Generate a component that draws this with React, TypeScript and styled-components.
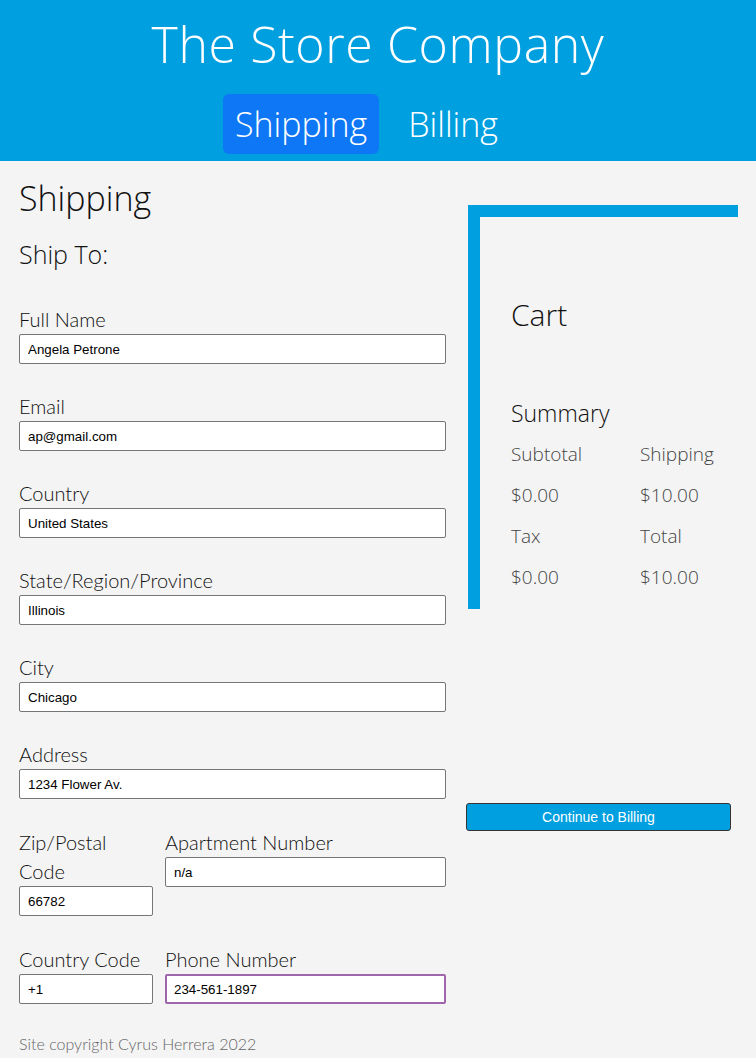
import React from "react";
import styled, { createGlobalStyle } from "styled-components";

const Global = createGlobalStyle`
  html, body { margin: 0; padding: 0; background: #f4f4f4; }
  body { font-family: "Lato", "Noto Sans", sans-serif; color: #111; }
  * { box-sizing: border-box; }
`;

const Header = styled.header`
  background: #009fe0;
  height: 161px;
  display: flex;
  flex-direction: column;
  align-items: center;
  color: #fff;
`;

const Title = styled.h1`
  margin: 12px 0 0;
  font-family: "Open Sans", sans-serif;
  font-weight: 300;
  font-size: 50px;
  line-height: 64px;
  letter-spacing: 0.6px;
`;

const Nav = styled.nav`
  display: flex;
  margin-top: 18px;
  margin-left: -6px;
`;

const NavItem = styled.a<{ $active?: boolean }>`
  display: flex;
  align-items: center;
  height: 60px;
  padding: 0 12px;
  border-radius: 6px;
  background: ${(p) => (p.$active ? "#0d77f5" : "transparent")};
  color: #fff;
  font-family: "Open Sans", sans-serif;
  font-weight: 300;
  font-size: 34px;
  margin-right: 17px;
`;

const Main = styled.main`
  display: flex;
  padding: 0 18px 0 19px;
`;

const Left = styled.section`
  width: 427px;
  flex: none;
`;

const Right = styled.aside`
  margin-left: 20px;
  flex: 1;
  display: flex;
  flex-direction: column;
`;

const H2 = styled.h2`
  margin: 15px 0 0;
  font-family: "Open Sans", sans-serif;
  font-weight: 300;
  font-size: 34px;
  line-height: 44px;
`;

const H3 = styled.h3`
  margin: 17px 0 34px;
  font-family: "Open Sans", sans-serif;
  font-weight: 300;
  font-size: 25px;
  line-height: 34px;
`;

const Group = styled.div`
  margin-bottom: 28px;
`;

const Label = styled.label`
  display: block;
  font-family: "Lato", sans-serif;
  font-weight: 300;
  font-size: 20px;
  line-height: 29px;
`;

const Input = styled.input<{ $focus?: boolean }>`
  display: block;
  width: 100%;
  height: 30px;
  font-family: "Liberation Sans", Arial, sans-serif;
  font-size: 13.33px;
  color: #000;
  background: #fff;
  border: ${(p) => (p.$focus ? "2px solid #a066ab" : "1px solid #767676")};
  border-radius: 2px;
  outline: none;
  padding: 0 0 0 ${(p) => (p.$focus ? "7px" : "8px")};
`;

const Pair = styled.div`
  display: grid;
  grid-template-columns: 134px 1fr;
  column-gap: 12px;
  margin-bottom: 29px;
`;

const PairCell = styled.div<{ $pad?: number }>`
  padding-top: ${(p) => p.$pad ?? 0}px;
`;

const Footer = styled.footer`
  font-family: "Lato", sans-serif;
  font-weight: 300;
  font-size: 16px;
  color: #666;
  margin-top: 30px;
`;

const CartBox = styled.div`
  margin-top: 44px;
  margin-left: 2px;
  width: 270px;
  height: 404px;
  border-top: 12px solid #009fe0;
  border-left: 12px solid #009fe0;
  padding: 78px 0 0 31px;
`;

const CartTitle = styled.h2`
  margin: 0;
  font-family: "Open Sans", sans-serif;
  font-weight: 300;
  font-size: 30px;
  line-height: 40px;
`;

const Summary = styled.h3`
  margin: 63px 0 11px;
  font-family: "Open Sans", sans-serif;
  font-weight: 300;
  font-size: 23px;
  line-height: 30px;
`;

const SumGrid = styled.div`
  display: grid;
  grid-template-columns: 129px 1fr;
  row-gap: 11px;
  font-family: "Open Sans", sans-serif;
  font-weight: 300;
  font-size: 19px;
  line-height: 30px;
  color: #444;
`;

const Button = styled.button`
  margin-top: 194px;
  width: 265px;
  height: 28px;
  background: #009fe0;
  color: #fff;
  border: 1px solid #333;
  border-radius: 3px;
  font-family: "Liberation Sans", Arial, sans-serif;
  font-size: 14px;
`;

const fields: [string, string][] = [
  ["Full Name", "Angela Petrone"],
  ["Email", "ap@gmail.com"],
  ["Country", "United States"],
  ["State/Region/Province", "Illinois"],
  ["City", "Chicago"],
  ["Address", "1234 Flower Av."],
];

export default function App() {
  return (
    <>
      <Global />
      <Header>
        <Title>The Store Company</Title>
        <Nav>
          <NavItem $active>Shipping</NavItem>
          <NavItem>Billing</NavItem>
        </Nav>
      </Header>
      <Main>
        <Left>
          <H2>Shipping</H2>
          <H3>Ship To:</H3>
          {fields.map(([l, v]) => (
            <Group key={l}>
              <Label>{l}</Label>
              <Input defaultValue={v} readOnly />
            </Group>
          ))}
          <Pair>
            <PairCell $pad={1}>
              <Label>Zip/Postal Code</Label>
              <Input defaultValue="66782" readOnly />
            </PairCell>
            <PairCell $pad={1}>
              <Label>Apartment Number</Label>
              <Input defaultValue="n/a" readOnly />
            </PairCell>
          </Pair>
          <Pair>
            <PairCell>
              <Label>Country Code</Label>
              <Input defaultValue="+1" readOnly />
            </PairCell>
            <PairCell>
              <Label>Phone Number</Label>
              <Input $focus defaultValue="234-561-1897" readOnly />
            </PairCell>
          </Pair>
          <Footer>Site copyright Cyrus Herrera 2022</Footer>
        </Left>
        <Right>
          <CartBox>
            <CartTitle>Cart</CartTitle>
            <Summary>Summary</Summary>
            <SumGrid>
              <span>Subtotal</span>
              <span>Shipping</span>
              <span>$0.00</span>
              <span>$10.00</span>
              <span>Tax</span>
              <span>Total</span>
              <span>$0.00</span>
              <span>$10.00</span>
            </SumGrid>
          </CartBox>
          <Button>Continue to Billing</Button>
        </Right>
      </Main>
    </>
  );
}
